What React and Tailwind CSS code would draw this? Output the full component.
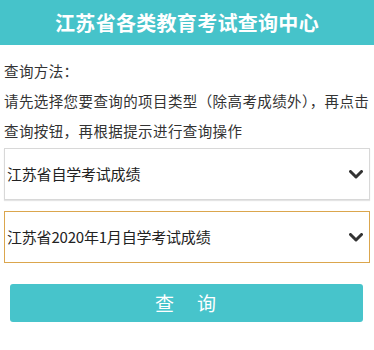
import React, { useState } from "react";

const font = "font-['Microsoft_YaHei','Noto_Sans_CJK_SC',sans-serif]";

const Chevron = () => (
  <svg width="14" height="9" viewBox="0 0 14 9" className="shrink-0">
    <path d="M1.5 1.5 L7 7 L12.5 1.5" fill="none" stroke="#333" strokeWidth="3" strokeLinecap="round" strokeLinejoin="round" />
  </svg>
);

const SelectBox = ({ value, active }) => (
  <div
    className={`mx-1 h-[52px] flex items-center justify-between pl-[2px] pr-[6px] bg-white border ${
      active ? "border-[#dba64d]" : "border-[#d8d8d8] shadow-[0_1px_1px_#e4e4e4]"
    }`}
  >
    <span className="text-[15px] text-[#222] tracking-[-0.2px]">{value}</span>
    <Chevron />
  </div>
);

export default function App() {
  const [first] = useState("江苏省自学考试成绩");
  const [second] = useState("江苏省2020年1月自学考试成绩");

  return (
    <div className={`w-[374px] h-[350px] bg-white ${font}`}>
      <div className="h-[45px] bg-[#46c3ca] flex items-center justify-center">
        <h1 className="text-white text-[20px] font-bold tracking-[0.3px]">江苏省各类教育考试查询中心</h1>
      </div>
      <div className="px-1 pt-[11px] text-[14.5px] text-[#333] leading-[30px] tracking-[0.4px] whitespace-nowrap">
        <p>查询方法：</p>
        <p>请先选择您要查询的项目类型（除高考成绩外），再点击</p>
        <p>查询按钮，再根据提示进行查询操作</p>
      </div>
      <div className="mt-[2px]">
        <SelectBox value={first} />
      </div>
      <div className="mt-[11px]">
        <SelectBox value={second} active />
      </div>
      <div className="mt-[21px] pl-[10px] pr-[11px]">
        <button className="w-full h-[38px] rounded-[3px] bg-[#47c4cb] text-white text-[19px] tracking-[2px]">
          查　询
        </button>
      </div>
    </div>
  );
}
